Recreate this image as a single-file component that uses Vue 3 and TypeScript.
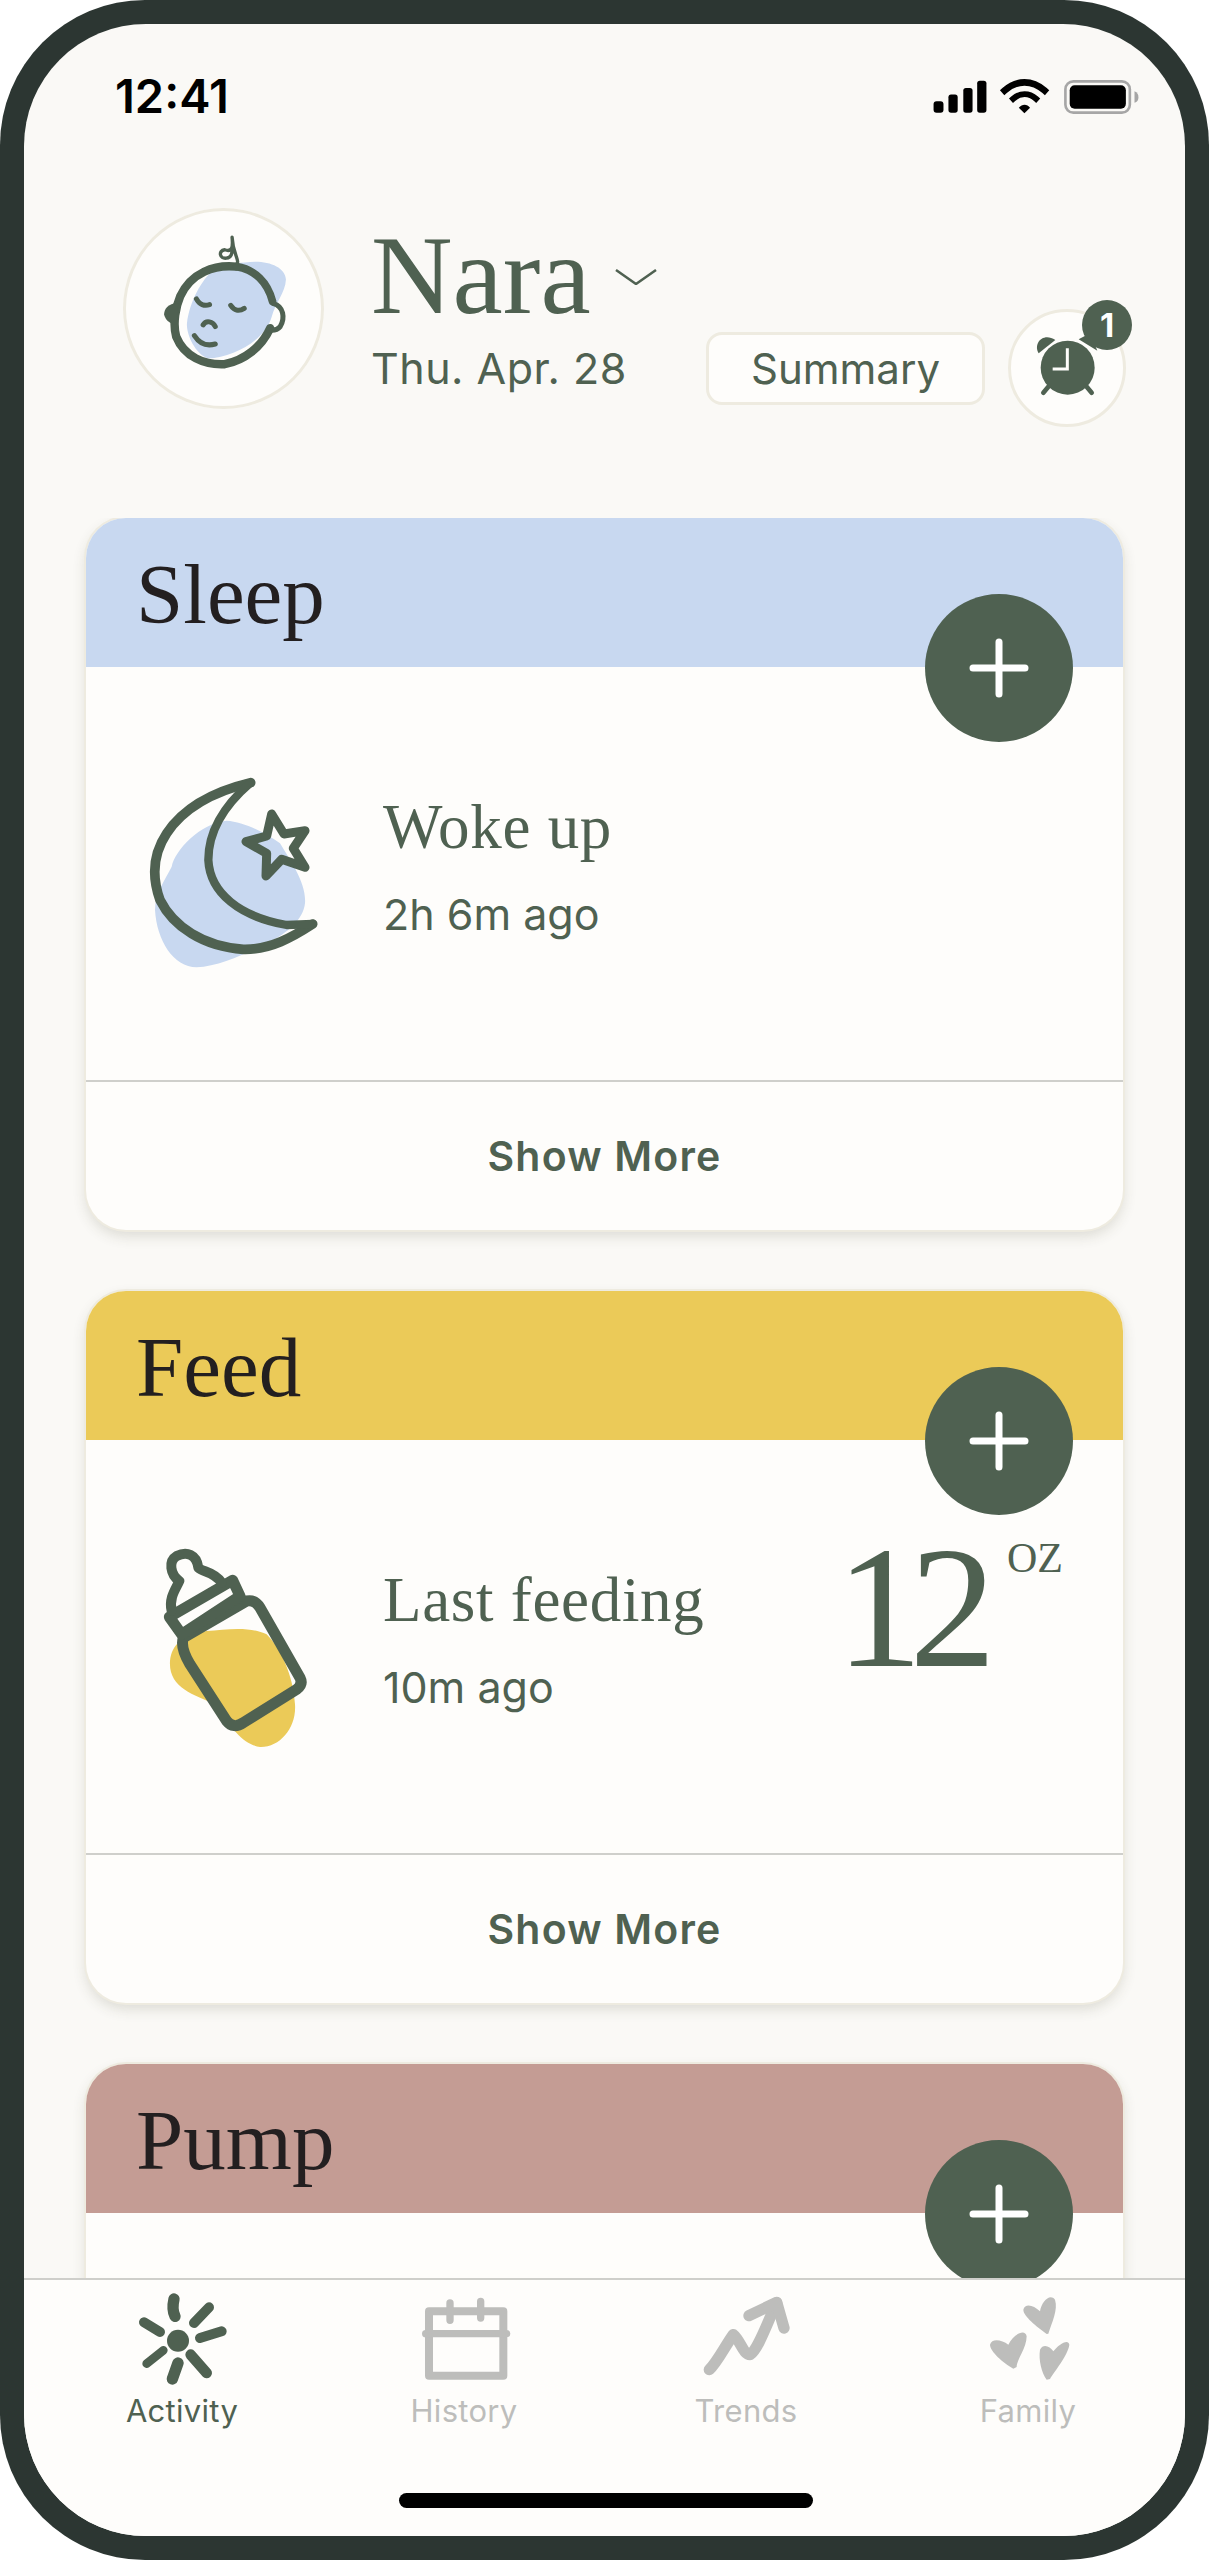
<script setup lang="ts">
interface Tracker {
  name: string
  tone: string
  label?: string
  ago?: string
  amount?: string
  unit?: string
  icon?: 'moon' | 'bottle'
}
const trackers: Tracker[] = [
  { name: 'Sleep', tone: 'blue', label: 'Woke up', ago: '2h 6m ago', icon: 'moon' },
  { name: 'Feed', tone: 'yellow', label: 'Last feeding', ago: '10m ago', amount: '12', unit: 'OZ', icon: 'bottle' },
  { name: 'Pump', tone: 'pink' },
]
</script>

<template>
  <div class="phone">
    <div class="screen">
      <div class="status">
        <span class="time">12:41</span>
        <svg class="status-icons" width="214" height="38" viewBox="90 80 640 115">
          <rect x="100" y="150" width="30" height="35" rx="9" fill="#000" />
          <rect x="145" y="130" width="28" height="55" rx="8" fill="#000" />
          <rect x="190" y="110" width="28" height="75" rx="8" fill="#000" />
          <rect x="232" y="88" width="28" height="97" rx="8" fill="#000" />
          <path d="M315 118C352 85 398 85 436 118" fill="none" stroke="#000" stroke-width="20" stroke-linecap="square" />
          <path d="M341 143C362 124 389 124 410 143" fill="none" stroke="#000" stroke-width="18" stroke-linecap="square" />
          <path d="M358 170C368 158 383 158 392 170L375 187Z" fill="#000" />
          <rect x="499" y="90" width="195" height="95" rx="24" fill="none" stroke="#a6a6a6" stroke-width="8" />
          <rect x="512" y="102" width="170" height="71" rx="15" fill="#000" />
          <path d="M708 120C717 124 720 130 720 138C720 146 717 152 708 155Z" fill="#a6a6a6" />
        </svg>
      </div>

      <header class="head">
        <div class="avatar">
          <svg width="201" height="201" viewBox="68 58 597 597">
            <path d="M430 220C490 210 550 230 552 270C550 310 520 340 510 380C490 450 400 500 320 505C280 490 255 430 258 400C265 340 300 270 340 240C370 225 400 222 430 220Z" fill="#c8d8f0" />
            <g fill="none" stroke="#4f6151" stroke-linecap="round" stroke-linejoin="round">
              <path d="M405 232C340 225 270 250 238 320C225 350 215 400 226 440C250 500 310 525 370 522C430 510 480 470 505 415" stroke-width="25" />
              <path d="M405 232C460 240 498 280 512 335" stroke-width="23" />
              <path d="M515 342C545 350 550 385 535 410C525 422 510 422 500 420" stroke-width="15" />
              <path d="M402 232C420 215 395 200 392 145C395 175 392 190 370 182C350 185 355 210 375 207C392 205 392 190 393 175" stroke-width="10" />
              <path d="M286 328C295 345 310 350 325 345" stroke-width="15" />
              <path d="M388 347C400 365 415 365 428 356" stroke-width="15" />
              <path d="M306 405C315 390 335 395 342 410" stroke-width="15" />
              <path d="M280 437C295 460 315 470 342 462" stroke-width="15" />
            </g>
            <path d="M232 340C200 340 190 360 190 375C195 395 215 405 228 405Z" fill="#4f6151" />
          </svg>
        </div>
        <div class="who">
          <div class="name-row">
            <span class="name">Nara</span>
            <svg class="chev" width="42" height="16" viewBox="0 0 42 16">
              <path d="M1 1L21 15L41 1" fill="none" stroke="#4f6151" stroke-width="2.5" />
            </svg>
          </div>
          <div class="date">Thu. Apr. 28</div>
        </div>
        <div class="actions">
          <div class="summary">Summary</div>
          <div class="alarm">
            <svg width="170" height="170" viewBox="0 0 510 510">
              <circle cx="263" cy="263" r="81" fill="#4f6151" />
              <path d="M262 205V267H218" fill="none" stroke="#fefdfb" stroke-width="9" />
              <path d="M205 320L190 338M320 320L335 338" stroke="#4f6151" stroke-width="14" stroke-linecap="round" />
              <path d="M176 220C158 190 190 155 226 180Z" fill="#4f6151" />
              <path d="M296 178L330 160L352 212Z" fill="#4f6151" />
            </svg>
            <span class="badge">1</span>
          </div>
        </div>
      </header>

      <main class="list">
        <section v-for="t in trackers" :key="t.name" class="card">
          <div class="card-head" :class="t.tone">{{ t.name }}</div>
          <div class="fab">
            <svg width="60" height="60" viewBox="0 0 60 60">
              <path d="M4 30H56M30 4V56" stroke="#fff" stroke-width="7" stroke-linecap="round" />
            </svg>
          </div>
          <div class="card-body">
            <div v-if="t.icon" class="icon">
              <svg v-if="t.icon === 'moon'" width="210" height="230" viewBox="0 0 630 690">
                <path d="M290 182C340 185 400 215 450 250C480 300 530 370 525 430C520 480 470 520 420 545C360 575 270 620 200 622C130 622 80 540 75 450C75 400 105 360 125 320C135 270 210 190 290 182Z" fill="#c8d8f0" />
                <g fill="none" stroke="#4f6151" stroke-linecap="round" stroke-linejoin="round">
                  <path d="M362 68C270 90 170 130 110 220C70 280 65 350 90 420C130 500 220 560 340 568C420 570 490 530 548 492" stroke-width="29" />
                  <path d="M362 68C290 130 235 210 235 300C240 400 330 470 470 495L548 492" stroke-width="25" />
                  <path d="M425 162L462 222L525 212L490 265L525 322L455 298L408 348L410 280L348 245L410 228Z" stroke-width="27" />
                </g>
              </svg>
              <svg v-else width="210" height="230" viewBox="-30 6 630 690">
                <path d="M90 390C95 340 130 310 200 300C260 295 330 285 380 310C420 350 460 430 465 520C470 590 420 650 360 648C310 640 280 600 225 520C160 490 85 470 90 390Z" fill="#ebca58" />
                <g fill="none" stroke="#4f6151" stroke-linecap="round" stroke-linejoin="round" stroke-width="33">
                  <path d="M130 320L320 210Q345 205 360 230L480 440Q490 460 470 475L310 575Q280 595 260 570L150 400Q120 350 130 320Z" />
                  <path d="M88 258L278 148L300 195L125 310Z" />
                  <path d="M95 240C85 200 110 170 118 150C90 130 85 90 110 75C140 60 170 70 175 110C190 125 220 120 245 155" stroke-width="30" />
                </g>
              </svg>
            </div>
            <div v-if="t.label" class="info">
              <div class="label">{{ t.label }}</div>
              <div class="ago">{{ t.ago }}</div>
            </div>
            <div v-if="t.amount" class="amount">
              <span class="num">{{ t.amount }}</span>
              <span class="unit">{{ t.unit }}</span>
            </div>
          </div>
          <div v-if="t.label" class="card-foot">Show More</div>
        </section>
      </main>

      <nav class="tabs">
        <div class="tab-row">
          <div class="tab on">
            <svg width="100" height="100" viewBox="34 25 300 300">
              <g fill="none" stroke="#4f6151" stroke-linecap="round">
                <path d="M160 58C155 80 158 100 163 110" stroke-width="34" />
                <path d="M265 83L220 130" stroke-width="30" />
                <path d="M303 155L238 175" stroke-width="30" />
                <path d="M210 225L258 280" stroke-width="32" />
                <path d="M172 250L155 298" stroke-width="34" />
                <path d="M128 212L78 252" stroke-width="26" />
                <path d="M70 128L118 157" stroke-width="30" />
              </g>
              <circle cx="172" cy="183" r="33" fill="#4f6151" />
            </svg>
            <span>Activity</span>
          </div>
          <div class="tab">
            <svg width="100" height="100" viewBox="880 25 300 300">
              <g fill="none" stroke="#bdbdbb" stroke-linecap="round" stroke-linejoin="round">
                <path d="M925 95H1148V288H925Z" stroke-width="24" />
                <path d="M915 162H1158" stroke-width="22" />
                <path d="M988 70V122M1080 65V115" stroke-width="22" />
              </g>
            </svg>
            <span>History</span>
          </div>
          <div class="tab">
            <svg width="100" height="100" viewBox="48 25 300 300">
              <g fill="none" stroke="#bdbdbb" stroke-linecap="round" stroke-linejoin="round" stroke-width="34">
                <path d="M88 270C110 250 135 200 160 165C180 180 190 225 210 225C235 210 265 120 290 70" />
                <path d="M207 108L290 68L312 145" />
              </g>
            </svg>
            <span>Trends</span>
          </div>
          <div class="tab">
            <svg width="100" height="100" viewBox="894 25 300 300">
              <g fill="#bdbdbb">
                <path d="M1100 163C1070 140 1030 110 1030 90C1035 70 1060 75 1080 95C1085 65 1110 40 1125 60C1135 90 1115 130 1105 162Z" />
                <path d="M1000 267C970 250 930 215 930 195C935 175 965 180 985 195C1000 165 1035 145 1040 170C1040 205 1010 240 1010 262Z" />
                <path d="M1100 300C1085 280 1075 240 1080 210C1090 190 1110 200 1120 215C1135 195 1165 175 1168 195C1165 225 1120 280 1110 298Z" />
              </g>
            </svg>
            <span>Family</span>
          </div>
        </div>
        <div class="home"></div>
      </nav>
    </div>
  </div>
</template>

<style>
html,
body {
  margin: 0;
  background: #fff;
}
</style>

<style scoped>
.phone {
  width: 1209px;
  height: 2560px;
  box-sizing: border-box;
  padding: 24px;
  background: #2c3632;
  border-radius: 145px;
  font-family: Inter, 'Liberation Sans', sans-serif;
  color: #4f6151;
}
.screen {
  height: 2512px;
  display: flex;
  flex-direction: column;
  background: #faf9f6;
  border-radius: 122px;
  overflow: hidden;
}
.status {
  height: 88px;
  padding: 48px 42px 2px 91px;
  box-sizing: content-box;
  display: flex;
  justify-content: space-between;
  align-items: flex-start;
}
.time {
  font-size: 47px;
  line-height: 48px;
  font-weight: 600;
  color: #000;
}
.status-icons {
  margin-top: 6px;
}
.head {
  margin-top: 46px;
  padding: 0 59px 0 99px;
  height: 219px;
  display: flex;
}
.avatar {
  width: 201px;
  height: 201px;
  box-sizing: border-box;
  border-radius: 50%;
  overflow: hidden;
  background: #fefdfb;
  box-shadow: inset 0 0 0 3px #eeebe0;
  flex: none;
}
.who {
  margin-left: 47px;
  margin-top: 11px;
}
.name-row {
  display: flex;
  align-items: flex-start;
}
.name {
  font-family: 'Liberation Serif', serif;
  font-size: 113px;
  line-height: 112px;
}
.chev {
  margin: 50px 0 0 24px;
}
.date {
  font-size: 43px;
  line-height: 50px;
  margin-top: 12px;
  letter-spacing: 0.5px;
}
.actions {
  margin-left: auto;
  align-self: flex-end;
  display: flex;
  align-items: center;
  gap: 23px;
}
.summary {
  width: 279px;
  height: 73px;
  box-sizing: border-box;
  border: 3px solid #eeebe0;
  border-radius: 16px;
  background: #fefdfb;
  display: flex;
  align-items: center;
  justify-content: center;
  font-size: 42px;
}
.alarm {
  position: relative;
  width: 118px;
  height: 118px;
  box-sizing: border-box;
  border-radius: 50%;
  background: #fefdfb;
  border: 3px solid #eeebe0;
}
.alarm svg {
  position: absolute;
  left: -31px;
  top: -32px;
}
.badge {
  position: absolute;
  left: 71px;
  top: -12px;
  width: 50px;
  height: 50px;
  border-radius: 50%;
  background: #4f6151;
  color: #fff;
  font-size: 33px;
  font-weight: 700;
  line-height: 50px;
  text-align: center;
}
.list {
  flex: 1;
  min-height: 0;
  overflow: hidden;
  margin-top: 91px;
  padding: 0 62px;
}
.card {
  position: relative;
  height: 712px;
  box-sizing: border-box;
  margin-bottom: 61px;
  display: flex;
  flex-direction: column;
  background: #fefdfb;
  border-radius: 40px;
  box-shadow: 0 0 0 2px #eeebe0, 0 6px 14px rgba(60, 60, 40, 0.16);
}
.card-head {
  height: 149px;
  box-sizing: border-box;
  padding: 26px 0 0 50px;
  border-radius: 40px 40px 0 0;
  font-family: 'Liberation Serif', serif;
  font-size: 85px;
  line-height: 100px;
  color: #231f20;
}
.blue {
  background: #c8d8f0;
}
.yellow {
  background: #ebca58;
}
.pink {
  background: #c49c94;
}
.fab {
  position: absolute;
  right: 50px;
  top: 76px;
  width: 148px;
  height: 148px;
  border-radius: 50%;
  background: #4f6151;
  display: flex;
  align-items: center;
  justify-content: center;
}
.card-body {
  flex: 1;
  display: flex;
  align-items: flex-start;
  padding: 93px 0 0 44px;
}
.icon {
  width: 210px;
  height: 230px;
  flex: none;
}
.info {
  margin-left: 43px;
  padding-top: 32px;
}
.label {
  font-family: 'Liberation Serif', serif;
  font-size: 63px;
  line-height: 70px;
  letter-spacing: 0.7px;
}
.ago {
  font-size: 43px;
  line-height: 50px;
  margin-top: 27px;
}
.amount {
  margin-left: auto;
  display: flex;
  align-items: flex-start;
  font-family: 'Liberation Serif', serif;
  padding-right: 60px;
}
.num {
  font-size: 173px;
  line-height: 170px;
  letter-spacing: -13px;
  margin-top: -10px;
}
.unit {
  font-size: 42px;
  line-height: 50px;
  margin-left: 24px;
}
.card-foot {
  height: 150px;
  box-sizing: border-box;
  border-top: 2px solid #cfcfcb;
  display: flex;
  align-items: center;
  justify-content: center;
  font-size: 41px;
  font-weight: 600;
  letter-spacing: 1.2px;
}
.tabs {
  height: 258px;
  box-sizing: border-box;
  flex: none;
  background: #fefdfb;
  border-top: 2px solid #cfcfcb;
  display: flex;
  flex-direction: column;
}
.tab-row {
  display: grid;
  grid-template-columns: repeat(4, 282px);
  padding: 8px 16px 0 17px;
}
.tab {
  display: flex;
  flex-direction: column;
  align-items: center;
  font-size: 31px;
  line-height: 34px;
  letter-spacing: 0.3px;
  color: #bdbdbb;
}
.tab span {
  margin-top: 6px;
}
.tab.on {
  color: #4f6151;
}
.home {
  width: 414px;
  height: 15px;
  margin: auto 0 28px 375px;
  border-radius: 8px;
  background: #000;
}
</style>
